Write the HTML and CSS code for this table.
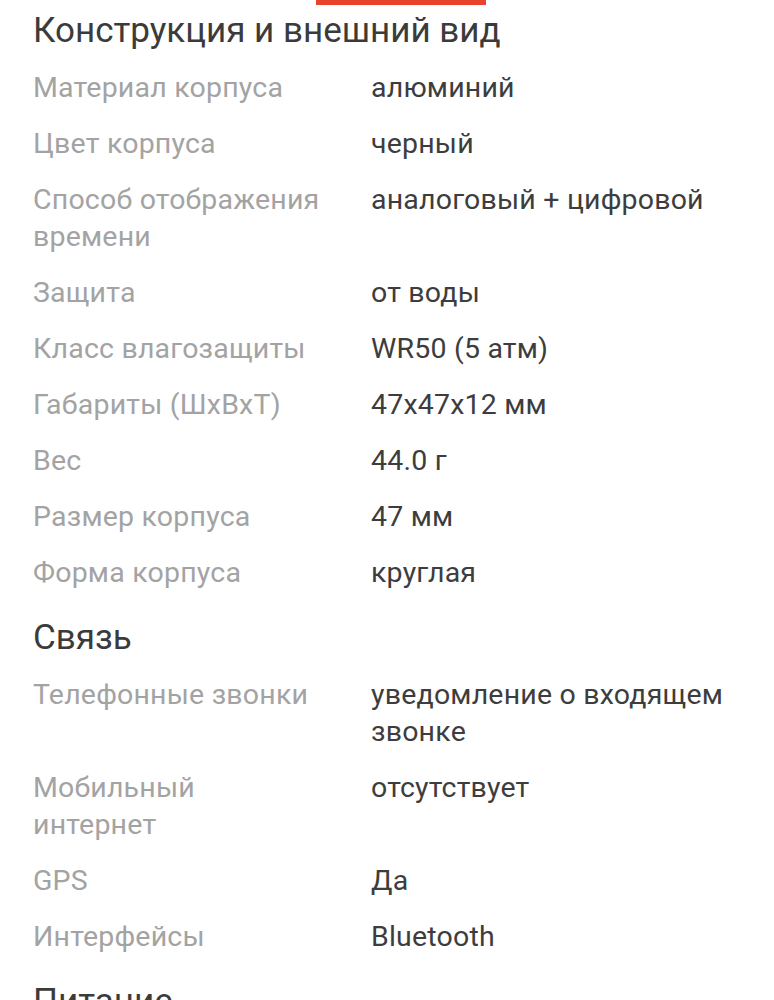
FILE: index.html
```html
<!DOCTYPE html>
<html lang="ru">
<head>
<meta charset="utf-8">
<title>Характеристики</title>
<link rel="stylesheet" href="styles.css">
</head>
<body>
<div class="tab-indicator"></div>
<main class="specs">
  <section class="group">
    <h2 class="group-title">Конструкция и внешний вид</h2>
    <dl class="rows">
      <dt>Материал корпуса</dt><dd>алюминий</dd>
      <dt>Цвет корпуса</dt><dd>черный</dd>
      <dt>Способ отображения времени</dt><dd>аналоговый + цифровой</dd>
      <dt>Защита</dt><dd>от воды</dd>
      <dt>Класс влагозащиты</dt><dd>WR50 (5 атм)</dd>
      <dt>Габариты (ШxВxТ)</dt><dd>47x47x12 мм</dd>
      <dt>Вес</dt><dd>44.0 г</dd>
      <dt>Размер корпуса</dt><dd>47 мм</dd>
      <dt>Форма корпуса</dt><dd>круглая</dd>
    </dl>
  </section>
  <section class="group">
    <h2 class="group-title">Связь</h2>
    <dl class="rows">
      <dt>Телефонные звонки</dt><dd>уведомление о входящем звонке</dd>
      <dt>Мобильный интернет</dt><dd>отсутствует</dd>
      <dt>GPS</dt><dd>Да</dd>
      <dt>Интерфейсы</dt><dd>Bluetooth</dd>
    </dl>
  </section>
  <section class="group">
    <h2 class="group-title">Питание</h2>
  </section>
</main>
</body>
</html>
```

FILE: styles.css
```css
html, body {
  margin: 0;
  padding: 0;
  background: #ffffff;
}

body {
  font-family: Roboto, "Noto Sans", sans-serif;
  overflow: hidden;
  height: 1000px;
}

.tab-indicator {
  width: 170px;
  height: 5px;
  margin-left: 316px;
  background: #e8432d;
}

.specs {
  padding: 6px 33px 0 33px;
}

.group + .group {
  margin-top: 18px;
}

.group-title {
  margin: 0 0 8px 0;
  font-size: 35px;
  line-height: 40px;
  font-weight: 400;
  color: #3b3b3b;
}

.rows {
  display: grid;
  grid-template-columns: 338px 1fr;
  margin: 0;
}

.rows dt,
.rows dd {
  margin: 0;
  padding: 9.5px 0;
  font-size: 28.5px;
  line-height: 37px;
  letter-spacing: 0.2px;
}

.rows dt {
  color: #a3a3a3;
  padding-right: 50px;
}

.rows dd {
  color: #3d3d3d;
}
```
